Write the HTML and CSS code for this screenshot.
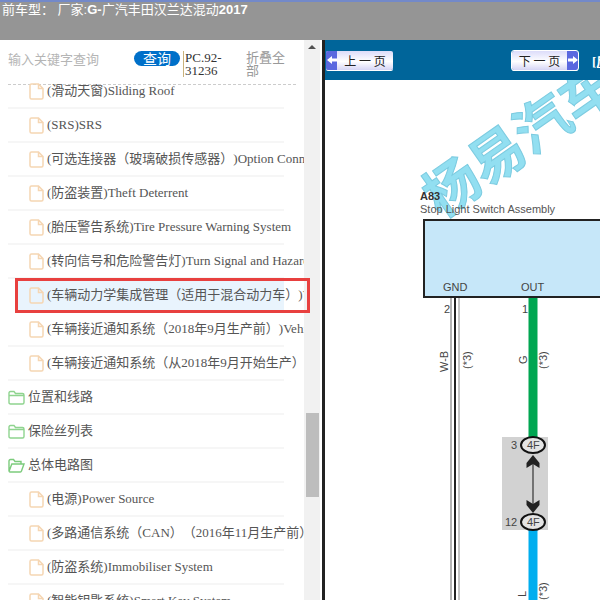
FILE: index.html
```html
<!DOCTYPE html>
<html lang="zh">
<head>
    <meta charset="UTF-8">
    <title>电路图</title>
    <link rel="stylesheet" href="styles.css">
</head>
<body>
    <svg class="defs" width="0" height="0">
        <symbol id="file" viewBox="0 0 15 17">
            <path d="M1 2.5 Q1 1 2.5 1 H9.5 L14 5.5 V14.5 Q14 16 12.5 16 H2.5 Q1 16 1 14.5 Z M9.5 1 V5.5 H14" fill="none" stroke="#f5d6b3" stroke-width="1.5"/>
        </symbol>
        <symbol id="folder" viewBox="0 0 17 15">
            <path d="M1 3 Q1 1.5 2.5 1.5 H6 L7.5 3.5 H14.5 Q16 3.5 16 5 V12.5 Q16 14 14.5 14 H2.5 Q1 14 1 12.5 Z M1 5.5 H16" fill="none" stroke="#8fd48f" stroke-width="1.4"/>
        </symbol>
        <symbol id="folder-open" viewBox="0 0 17 15">
            <path d="M1 12.5 V3 Q1 1.5 2.5 1.5 H5.5 L7 3.5 H13 V6 M1 13.5 L3.8 6 H16 L13.4 13.2 Q13.2 14 12.4 14 H2 Q1 14 1 12.5 Z" fill="none" stroke="#7ccb7c" stroke-width="1.4"/>
        </symbol>
    </svg>

    <header class="top-bar">前车型： 厂家:<b>G-</b>广汽丰田汉兰达混动<b>2017</b></header>

    <div class="main">
        <aside class="side">
            <div class="side-scroll">
                <div class="search">
                    <span class="search-hint">输入关键字查询</span>
                    <span class="search-btn">查询</span>
                    <span class="part-no">PC.92-31236</span>
                    <span class="collapse">折叠全部</span>
                </div>
                <ul class="tree">
                    <li class="row leaf"><svg class="ico-file"><use href="#file"/></svg><span>(滑动天窗)Sliding Roof</span></li>
                    <li class="row leaf"><svg class="ico-file"><use href="#file"/></svg><span>(SRS)SRS</span></li>
                    <li class="row leaf"><svg class="ico-file"><use href="#file"/></svg><span>(可选连接器（玻璃破损传感器）)Option Connector</span></li>
                    <li class="row leaf"><svg class="ico-file"><use href="#file"/></svg><span>(防盗装置)Theft Deterrent</span></li>
                    <li class="row leaf"><svg class="ico-file"><use href="#file"/></svg><span>(胎压警告系统)Tire Pressure Warning System</span></li>
                    <li class="row leaf"><svg class="ico-file"><use href="#file"/></svg><span>(转向信号和危险警告灯)Turn Signal and Hazard Warning</span></li>
                    <li class="row leaf active"><svg class="ico-file"><use href="#file"/></svg><span>(车辆动力学集成管理（适用于混合动力车）)Vehicle Dynamics</span></li>
                    <li class="row leaf"><svg class="ico-file"><use href="#file"/></svg><span>(车辆接近通知系统（2018年9月生产前）)Vehicle Proximity</span></li>
                    <li class="row leaf"><svg class="ico-file"><use href="#file"/></svg><span>(车辆接近通知系统（从2018年9月开始生产）)Vehicle</span></li>
                    <li class="row folder"><svg class="ico-folder"><use href="#folder"/></svg><span>位置和线路</span></li>
                    <li class="row folder"><svg class="ico-folder"><use href="#folder"/></svg><span>保险丝列表</span></li>
                    <li class="row folder"><svg class="ico-folder"><use href="#folder-open"/></svg><span>总体电路图</span></li>
                    <li class="row leaf"><svg class="ico-file"><use href="#file"/></svg><span>(电源)Power Source</span></li>
                    <li class="row leaf"><svg class="ico-file"><use href="#file"/></svg><span>(多路通信系统（CAN）（2016年11月生产前）)Multiplex</span></li>
                    <li class="row leaf"><svg class="ico-file"><use href="#file"/></svg><span>(防盗系统)Immobiliser System</span></li>
                    <li class="row leaf"><svg class="ico-file"><use href="#file"/></svg><span>(智能钥匙系统)Smart Key System</span></li>
                </ul>
            </div>
            <div class="scrollbar">
                <span class="scroll-up"></span>
                <span class="scroll-thumb"></span>
            </div>
            <div class="red-mark"></div>
        </aside>

        <section class="viewer">
            <div class="toolbar">
                <span class="page-btn">
                    <span class="page-arrow"><svg width="10" height="10" viewBox="0 0 10 10"><path d="M0 5 L5 1 V3.5 H10 V6.5 H5 V9 Z" fill="#fff"/></svg></span>
                    <span class="page-label">上 一 页</span>
                </span>
                <span class="page-btn next">
                    <span class="page-label">下 一 页</span>
                    <span class="page-arrow"><svg width="10" height="10" viewBox="0 0 10 10"><path d="M10 5 L5 1 V3.5 H0 V6.5 H5 V9 Z" fill="#fff"/></svg></span>
                </span>
                <span class="tool-link">[后</span>
            </div>
            <svg class="diagram" viewBox="325 80 275 520" width="275" height="520">
                <text class="mark" transform="translate(441 219) rotate(-35)">杨易汽车</text>

                <text class="code" x="420" y="200">A83</text>
                <text class="label" x="420" y="213">Stop Light Switch Assembly</text>
                <rect x="424" y="220" width="190" height="77" fill="#c6e7f9" stroke="#222" stroke-width="2"/>
                <text class="pin" x="443" y="291">GND</text>
                <text class="pin" x="521" y="291">OUT</text>
                <text class="pin" x="444" y="313">2</text>
                <text class="pin" x="522" y="313">1</text>

                <line x1="451" y1="298" x2="451" y2="600" stroke="#999" stroke-width="1.5"/>
                <line x1="455" y1="298" x2="455" y2="600" stroke="#222" stroke-width="2"/>
                <line x1="459" y1="298" x2="459" y2="600" stroke="#888" stroke-width="1"/>
                <line x1="533" y1="298" x2="533" y2="440" stroke="#00a651" stroke-width="9"/>
                <rect x="502" y="437" width="46" height="93" fill="#d2d2d2"/>
                <line x1="533" y1="528" x2="533" y2="600" stroke="#00aeef" stroke-width="9"/>

                <ellipse cx="533" cy="445" rx="12" ry="8" fill="#e4e4e4" stroke="#111" stroke-width="2"/>
                <ellipse cx="533" cy="522" rx="12" ry="8" fill="#e4e4e4" stroke="#111" stroke-width="2"/>
                <text class="pin" x="527" y="449">4F</text>
                <text class="pin" x="527" y="526">4F</text>
                <text class="pin" x="511" y="449">3</text>
                <text class="pin" x="505" y="526">12</text>
                <line x1="533" y1="462" x2="533" y2="505" stroke="#333" stroke-width="1.2"/>
                <path d="M533 455 L539.5 463 V468 L533 464 L526.5 468 V463 Z" fill="#222"/>
                <path d="M533 513 L539.5 505 V500 L533 504 L526.5 500 V505 Z" fill="#222"/>

                <text class="pin" transform="translate(448 372) rotate(-90)">W-B</text>
                <text class="pin" transform="translate(471 369) rotate(-90)">(*3)</text>
                <text class="pin" transform="translate(527 364) rotate(-90)">G</text>
                <text class="pin" transform="translate(547 369) rotate(-90)">(*3)</text>
                <text class="pin" transform="translate(526 597) rotate(-90)">L</text>
                <text class="pin" transform="translate(547 600) rotate(-90)">(*3)</text>
            </svg>
        </section>
    </div>
</body>
</html>
```

FILE: styles.css
```css
html, body {
    margin: 0;
    padding: 0;
    height: 600px;
    overflow: hidden;
    background-color: #fff;
}
.defs {
    display: block;
    height: 0;
}
.top-bar {
    box-sizing: border-box;
    height: 40px;
    padding-left: 2px;
    background-color: #959595;
    border-top: 2px solid #7389c9;
    color: #fff;
    font: 13px/15px "Liberation Sans", "Noto Sans CJK SC", sans-serif;
    white-space: nowrap;
}
.main {
    display: flex;
    height: 560px;
}

/* left tree */
.side {
    position: relative;
    display: flex;
    flex: 0 0 322px;
    border-right: 3px solid #222;
    box-sizing: content-box;
}
.side-scroll {
    width: 304px;
    overflow: hidden;
}
.search {
    box-sizing: border-box;
    display: flex;
    align-items: flex-start;
    height: 45px;
    margin: 0 8px;
    padding-top: 11px;
    border-bottom: 1px dashed #ccc;
    font-size: 13px;
    line-height: 13px;
}
.search-hint {
    flex: none;
    width: 126px;
    color: #b5b5b5;
    font-family: "Liberation Sans", "Noto Sans CJK SC", sans-serif;
    line-height: 17px;
}
.search-btn {
    flex: none;
    width: 46px;
    height: 15px;
    border-radius: 8px;
    background-color: #0070c9;
    color: #fff;
    font: 14px/15px "Noto Sans CJK SC", sans-serif;
    text-align: center;
}
.part-no {
    box-sizing: border-box;
    flex: none;
    width: 63px;
    margin-left: 3px;
    padding: 0 20px 0 1px;
    border-left: 1px solid #c9b27c;
    color: #333;
    font-family: "Liberation Serif", serif;
}
.collapse {
    flex: none;
    width: 39px;
    margin-top: -1px;
    color: #999;
    font-family: "Noto Sans CJK SC", sans-serif;
}
.tree {
    list-style: none;
    width: 276px;
    margin: -10px 0 0 8px;
    padding: 0;
}
.row {
    box-sizing: border-box;
    display: flex;
    align-items: center;
    height: 34px;
    border-bottom: 2px solid #f6f6f6;
    color: #555;
    font: 13px/32px "Liberation Serif", "Noto Sans CJK SC", serif;
    white-space: nowrap;
    text-spacing-trim: space-all;
}
.leaf {
    padding-left: 21px;
}
.active {
    margin-left: 8px;
    padding-left: 13px;
    background-color: #e9f4fd;
}
.ico-file {
    flex: none;
    width: 15px;
    height: 17px;
    margin-right: 3px;
}
.ico-folder {
    flex: none;
    width: 17px;
    height: 15px;
    margin-right: 3px;
}
.red-mark {
    position: absolute;
    left: 15px;
    top: 238px;
    width: 289px;
    height: 29px;
    border: 3px solid #e8403f;
}
.scrollbar {
    position: relative;
    flex: 0 0 16px;
    background-color: #f1f1f1;
}
.scroll-up {
    position: absolute;
    left: 4px;
    top: 5px;
    border-left: 4px solid transparent;
    border-right: 4px solid transparent;
    border-bottom: 4px solid #505050;
}
.scroll-thumb {
    position: absolute;
    left: 2px;
    top: 373px;
    width: 13px;
    height: 84px;
    background-color: #bdbdbd;
}

/* right viewer */
.viewer {
    flex: 1;
    min-width: 0;
    overflow: hidden;
}
.toolbar {
    box-sizing: border-box;
    display: flex;
    align-items: center;
    height: 40px;
    padding-left: 1px;
    background-color: #00659a;
    white-space: nowrap;
}
.page-btn {
    display: flex;
    flex: none;
    align-items: stretch;
    width: 67px;
    height: 19px;
    border-radius: 2px;
    background: linear-gradient(#dcdcfa, #fff 55%, #d5d5f5);
    box-shadow: 0 1px 0 #fff;
    overflow: hidden;
}
.next {
    width: 66px;
    margin-left: 119px;
    outline: 1px solid #fff;
}
.page-arrow {
    display: flex;
    flex: 0 0 11px;
    align-items: center;
    justify-content: center;
    background-color: #5a68df;
}
.page-label {
    flex: 1;
    color: #222;
    font: 12px/19px "Noto Sans CJK SC", sans-serif;
    text-align: center;
}
.tool-link {
    margin-left: 14px;
    color: #fff;
    font: bold 13px "Liberation Serif", "Noto Sans CJK SC", serif;
    text-decoration: underline;
}
.diagram {
    display: block;
}
.mark {
    fill: #92dff1;
    stroke: #7ccbe0;
    stroke-width: 1;
    font: bold 55px "Noto Sans CJK SC", sans-serif;
}
.code {
    fill: #333;
    font: bold 11px "Liberation Sans", sans-serif;
}
.label {
    fill: #555;
    font: 11px "Liberation Sans", sans-serif;
}
.pin {
    fill: #444;
    font: 11px "Liberation Sans", sans-serif;
}
```
